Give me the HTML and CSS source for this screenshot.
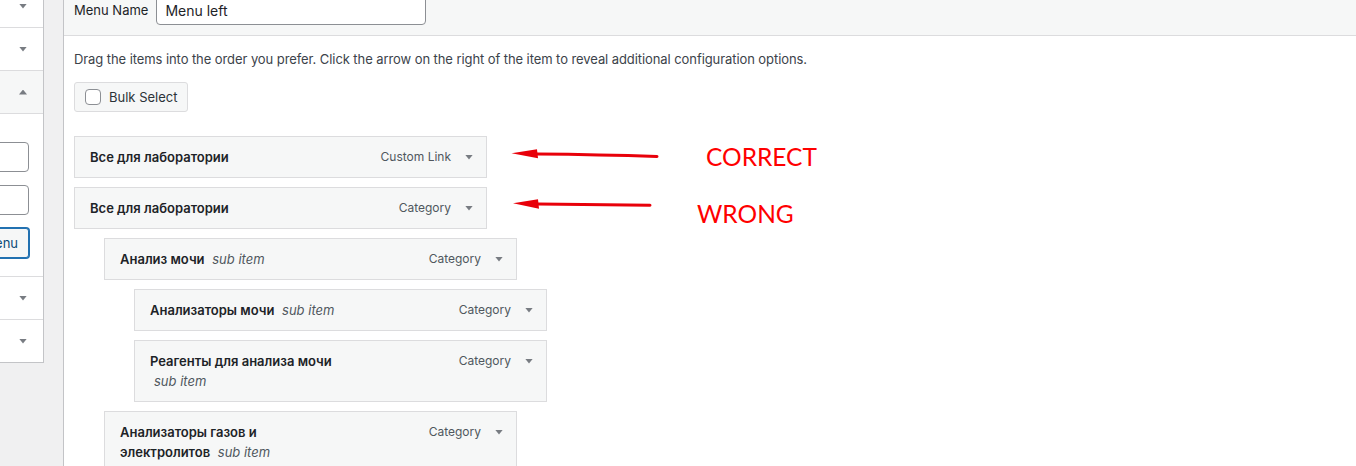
FILE: index.html
```html
<!DOCTYPE html>
<html lang="ru">
<head>
<meta charset="utf-8">
<title>Menus</title>
<link rel="stylesheet" href="styles.css">
</head>
<body>
<div class="page">
  <aside class="side">
    <div class="side-inner">
      <div class="acc-row"><span class="tri"></span></div>
      <div class="acc-row"><span class="tri"></span></div>
      <div class="acc-row open"><span class="tri up"></span></div>
      <div class="acc-body">
        <div class="field"></div>
        <div class="field"></div>
        <div class="side-btn">Add to Menu</div>
      </div>
      <div class="acc-row"><span class="tri"></span></div>
      <div class="acc-row"><span class="tri"></span></div>
    </div>
  </aside>
  <main class="main">
    <header class="menu-head">
      <label class="menu-label">Menu Name</label>
      <input class="menu-name" type="text" value="Menu left">
    </header>
    <div class="menu-body">
      <p class="hint">Drag the items into the order you prefer. Click the arrow on the right of the item to reveal additional configuration options.</p>
      <button class="bulk"><span class="cb"></span>Bulk Select</button>
      <ul class="menu-list">
        <li class="item d0">
          <div class="handle">
            <span class="item-title"><span class="name">Все для лаборатории</span></span>
            <span class="controls"><span class="type">Custom Link</span><span class="edit"><span class="tri"></span></span></span>
          </div>
        </li>
        <li class="item d0">
          <div class="handle">
            <span class="item-title"><span class="name">Все для лаборатории</span></span>
            <span class="controls"><span class="type">Category</span><span class="edit"><span class="tri"></span></span></span>
          </div>
        </li>
        <li class="item d1">
          <div class="handle">
            <span class="item-title"><span class="name">Анализ мочи</span> <span class="sub">sub item</span></span>
            <span class="controls"><span class="type">Category</span><span class="edit"><span class="tri"></span></span></span>
          </div>
        </li>
        <li class="item d2">
          <div class="handle">
            <span class="item-title"><span class="name">Анализаторы мочи</span> <span class="sub">sub item</span></span>
            <span class="controls"><span class="type">Category</span><span class="edit"><span class="tri"></span></span></span>
          </div>
        </li>
        <li class="item d2">
          <div class="handle">
            <span class="item-title"><span class="name">Реагенты для анализа мочи</span> <span class="sub">sub item</span></span>
            <span class="controls"><span class="type">Category</span><span class="edit"><span class="tri"></span></span></span>
          </div>
        </li>
        <li class="item d1">
          <div class="handle">
            <span class="item-title"><span class="name">Анализаторы газов и электролитов</span> <span class="sub">sub item</span></span>
            <span class="controls"><span class="type">Category</span><span class="edit"><span class="tri"></span></span></span>
          </div>
        </li>
      </ul>
    </div>
  </main>
</div>

<div class="annot">
  <svg class="arrows" width="1356" height="466" viewBox="0 0 1356 466">
    <path d="M537 154 Q600 154.5 657 156.5" fill="none" stroke="#e8000a" stroke-width="3" stroke-linecap="round"/>
    <path d="M511.5 153.3 L537 149.3 L538 158.3 Z" fill="#e8000a"/>
    <path d="M538 204 Q600 204.5 650 205.3" fill="none" stroke="#e8000a" stroke-width="3" stroke-linecap="round"/>
    <path d="M513 203.3 L538 199.3 L539 208.8 Z" fill="#e8000a"/>
  </svg>
  <span class="note note-correct">CORRECT</span>
  <span class="note note-wrong">WRONG</span>
</div>
</body>
</html>
```

FILE: styles.css
```css
* { box-sizing: border-box; }

html, body {
  margin: 0;
  height: 100%;
}

body {
  position: relative;
  overflow: hidden;
  background: #f0f0f1;
  color: #3c434a;
  font-family: Inter, "Noto Sans", "Liberation Sans", sans-serif;
  font-size: 13px;
  line-height: 1.4;
}

.page {
  display: flex;
  align-items: flex-start;
  gap: 19px;
  margin-top: -15px;
  min-height: calc(100% + 15px);
}

/* ---------- left sidebar (cut off) ---------- */
.side {
  flex: none;
  width: 44px;
  overflow: hidden;
  background: #fff;
  border-right: 1px solid #c3c4c7;
  border-bottom: 1px solid #c3c4c7;
}

.side-inner {
  width: 300px;
  margin-left: -257px;
}

.acc-row {
  display: flex;
  align-items: center;
  justify-content: flex-end;
  height: 43px;
  padding-right: 16px;
  border-bottom: 1px solid #dcdcde;
}

.side-inner > .acc-row:last-child { height: 42px; border-bottom: 0; }

.acc-row.open { background: #f6f7f7; }

.tri {
  display: block;
  width: 8px;
  height: 5px;
  background: #787c82;
  clip-path: polygon(0 0, 100% 0, 50% 100%);
}

.tri.up { clip-path: polygon(50% 0, 100% 100%, 0 100%); }

.acc-body {
  display: flex;
  flex-direction: column;
  align-items: flex-end;
  height: 163px;
  padding: 28px 14px 0 0;
  border-bottom: 1px solid #dcdcde;
}

.field {
  width: 250px;
  height: 30px;
  margin-bottom: 13px;
  border: 1px solid #8c8f94;
  border-radius: 4px;
  background: #fff;
}

.side-btn {
  height: 30px;
  padding: 0 10px;
  line-height: 28px;
  font-size: 13px;
  color: #0a4b78;
  background: #f6f7f7;
  border: 1px solid #2271b1;
  border-radius: 3px;
  box-shadow: 0 0 0 1px #2271b1;
  white-space: nowrap;
}

/* ---------- main panel ---------- */
.main {
  flex: 1;
  align-self: stretch;
  background: #fff;
  border-left: 1px solid #c3c4c7;
}

.menu-head {
  display: flex;
  align-items: center;
  height: 51px;
  padding: 10px;
  background: #f6f7f7;
  border-bottom: 1px solid #dcdcde;
}

.menu-label {
  margin-right: 8px;
  color: #1d2327;
}

.menu-name {
  width: 270px;
  height: 30px;
  padding: 0 8px;
  border: 1px solid #8c8f94;
  border-radius: 4px;
  background: #fff;
  color: #1d2327;
  font: 14px Inter, "Noto Sans", sans-serif;
}

.menu-body { padding: 0 10px; }

.hint {
  margin: 13px 0;
  line-height: 20px;
  letter-spacing: -0.08px;
  color: #3c434a;
}

.bulk {
  display: inline-flex;
  align-items: center;
  gap: 8px;
  height: 30px;
  padding: 0 10px;
  background: #f6f7f7;
  border: 1px solid #dcdcde;
  border-radius: 3px;
  color: #2c3338;
  font: 13px Inter, "Noto Sans", sans-serif;
}

.cb {
  width: 16px;
  height: 16px;
  border: 1px solid #8c8f94;
  border-radius: 4px;
  background: #fff;
}

.menu-list {
  list-style: none;
  margin: 0;
  padding: 15px 0 0;
}

.item {
  width: 413px;
  margin-top: 9px;
}

.item.d1 { margin-left: 30px; }
.item.d2 { margin-left: 60px; }

.handle {
  display: flex;
  align-items: flex-start;
  padding: 10px 7px 10px 15px;
  background: #f6f7f7;
  border: 1px solid #dcdcde;
  line-height: 20px;
}

.item-title {
  flex: 0 0 calc(100% - 177px);
}

.name {
  font-weight: 600;
  color: #1d2327;
}

.sub {
  margin-left: 4px;
  font-style: italic;
  white-space: nowrap;
  color: #50575e;
}

.controls {
  display: flex;
  align-items: center;
  gap: 8px;
  margin-left: auto;
  height: 20px;
  font-size: 12px;
  color: #50575e;
}

.edit {
  display: flex;
  align-items: center;
  justify-content: center;
  width: 20px;
  height: 20px;
}

/* ---------- annotations ---------- */
.annot {
  position: absolute;
  inset: 0;
  pointer-events: none;
}

.arrows {
  position: absolute;
  top: 0;
  left: 0;
}

.note {
  position: absolute;
  font-family: Lato, "Liberation Sans", sans-serif;
  font-size: 24.5px;
  line-height: 30px;
  color: #f00;
}

.note-correct { left: 706px; top: 142px; }
.note-wrong { left: 697px; top: 199px; }
```
